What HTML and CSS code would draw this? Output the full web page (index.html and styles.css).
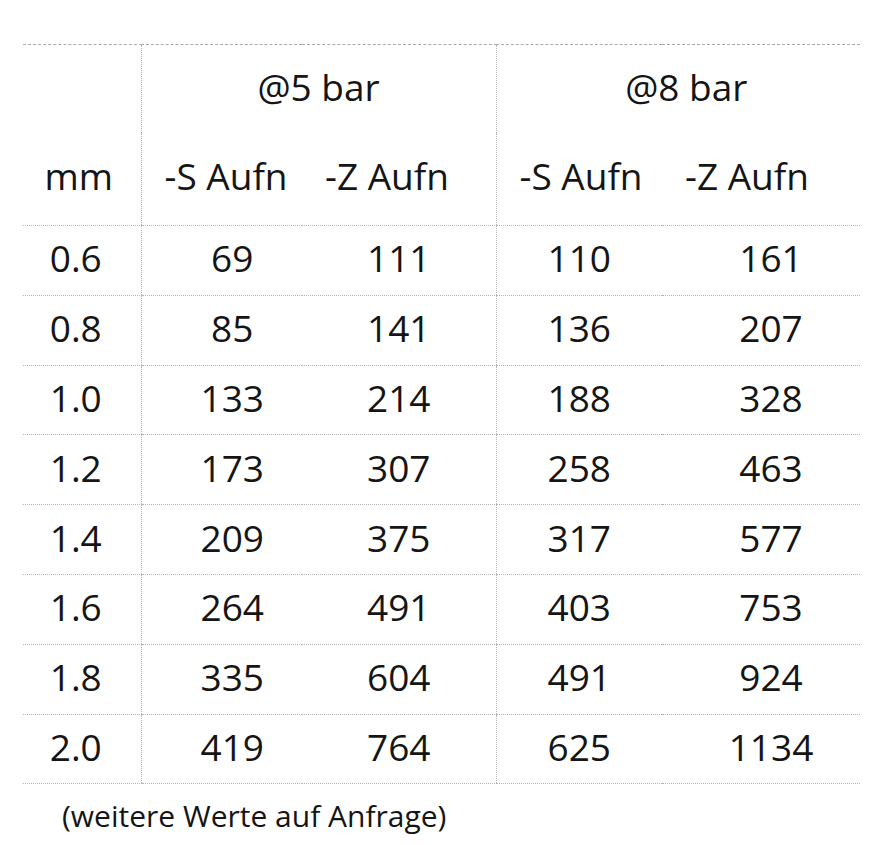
FILE: index.html
```html
<!DOCTYPE html>
<html lang="de">
<head>
<meta charset="utf-8">
<link rel="stylesheet" href="styles.css">
</head>
<body>
<div class="wrap">
<table class="data">
  <colgroup>
    <col class="c1"><col class="c2"><col class="c3"><col class="c4"><col class="c5">
  </colgroup>
  <thead>
    <tr class="h1">
      <th class="first"></th>
      <th colspan="2" class="grp g5 sep">@5 bar</th>
      <th colspan="2" class="grp g8 sep">@8 bar</th>
    </tr>
    <tr class="h2">
      <th class="first mm">mm</th>
      <th class="sub sep">-S Aufn</th>
      <th class="sub">-Z Aufn</th>
      <th class="sub sep">-S Aufn</th>
      <th class="sub">-Z Aufn</th>
    </tr>
  </thead>
  <tbody>
    <tr><td class="first">0.6</td><td class="a sep">69</td><td class="b">111</td><td class="c sep">110</td><td class="d">161</td></tr>
    <tr><td class="first">0.8</td><td class="a sep">85</td><td class="b">141</td><td class="c sep">136</td><td class="d">207</td></tr>
    <tr><td class="first">1.0</td><td class="a sep">133</td><td class="b">214</td><td class="c sep">188</td><td class="d">328</td></tr>
    <tr><td class="first">1.2</td><td class="a sep">173</td><td class="b">307</td><td class="c sep">258</td><td class="d">463</td></tr>
    <tr><td class="first">1.4</td><td class="a sep">209</td><td class="b">375</td><td class="c sep">317</td><td class="d">577</td></tr>
    <tr><td class="first">1.6</td><td class="a sep">264</td><td class="b">491</td><td class="c sep">403</td><td class="d">753</td></tr>
    <tr><td class="first">1.8</td><td class="a sep">335</td><td class="b">604</td><td class="c sep">491</td><td class="d">924</td></tr>
    <tr><td class="first">2.0</td><td class="a sep">419</td><td class="b">764</td><td class="c sep">625</td><td class="d">1134</td></tr>
  </tbody>
</table>
<p class="note">(weitere Werte auf Anfrage)</p>
</div>
</body>
</html>
```
FILE: styles.css
```css
html, body {
  margin: 0;
  padding: 0;
  background: #ffffff;
}
body {
  font-family: "Open Sans", "Liberation Sans", sans-serif;
  font-weight: 400;
  color: #151515;
}
.wrap {
  padding: 44px 0 0 23px;
}
.data {
  border-collapse: collapse;
  table-layout: fixed;
  width: 837px;
  font-size: 37px;
  border-top: 1px dashed #a8a8a8;
}
.c1 { width: 118px; }
.c2 { width: 161px; }
.c3 { width: 194px; }
.c4 { width: 166px; }
.c5 { width: 198px; }
.data th,
.data td {
  font-weight: 400;
  padding: 0;
  vertical-align: middle;
  line-height: 1;
}
.data .sep {
  border-left: 1px dotted #b5b5b5;
}
.data .h1 th {
  height: 82px;
  padding-bottom: 6px;
}
.data .h2 th {
  height: 84px;
  padding-bottom: 8px;
  border-bottom: 1px dotted #b5b5b5;
}
.data .grp { text-align: center; }
.data .g8 { padding-left: 16px; }
.data .sub {
  text-align: left;
  padding-left: 23px;
}
.data .first {
  text-align: center;
  padding-right: 12px;
}
.data .mm {
  padding-right: 6px;
}
.data td {
  height: 63.8px;
  padding-bottom: 5px;
  text-align: center;
  border-bottom: 1px dotted #b5b5b5;
}
.data td.a { padding-left: 21px; }
.data td.d { padding-left: 20px; }
.note {
  margin: 12px 0 0 39px;
  font-size: 30px;
  line-height: 1.3;
}
```
